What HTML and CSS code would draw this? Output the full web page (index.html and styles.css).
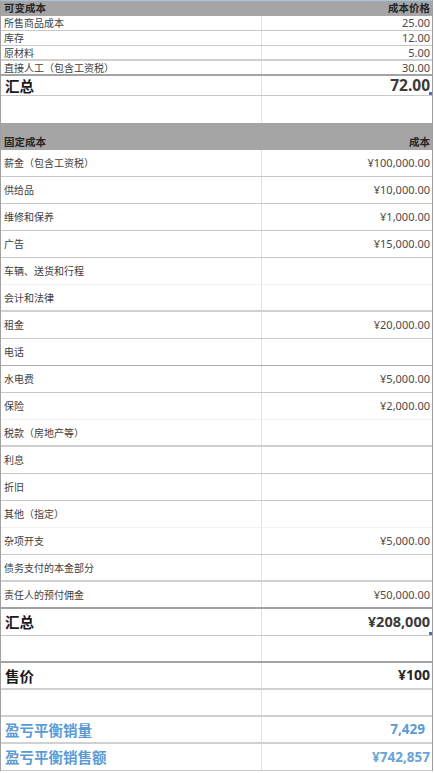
FILE: index.html
```html
<!DOCTYPE html>
<html lang="zh-CN">
<head>
<meta charset="utf-8">
<title>盈亏平衡分析</title>
<link rel="stylesheet" href="styles.css">
</head>
<body>
<div class="sheet">
  <div class="row hdr h16"><div class="c l">可变成本</div><div class="c r">成本价格</div></div>
  <div class="row h15 b1"><div class="c l">所售商品成本</div><div class="c r num">25.00</div></div>
  <div class="row h15 b1"><div class="c l">库存</div><div class="c r num">12.00</div></div>
  <div class="row h15 b2l"><div class="c l">原材料</div><div class="c r num">5.00</div></div>
  <div class="row h15 b2d"><div class="c l">直接人工（包含工资税）</div><div class="c r num">30.00</div></div>
  <div class="row h20 b1"><div class="c l total">汇总</div><div class="c r totalnum mark">72.00</div></div>
  <div class="row h27 nob"><div class="c l"></div><div class="c r"></div></div>
  <div class="row hdr h27 bottom"><div class="c l">固定成本</div><div class="c r">成本</div></div>

  <div class="row h27 b1"><div class="c l">薪金（包含工资税）</div><div class="c r num">¥100,000.00</div></div>
  <div class="row h27 b1"><div class="c l">供给品</div><div class="c r num">¥10,000.00</div></div>
  <div class="row h27 b1"><div class="c l">维修和保养</div><div class="c r num">¥1,000.00</div></div>
  <div class="row h27 b1"><div class="c l">广告</div><div class="c r num">¥15,000.00</div></div>
  <div class="row h27 bf"><div class="c l">车辆、送货和行程</div><div class="c r num"></div></div>
  <div class="row h27 b2l"><div class="c l">会计和法律</div><div class="c r num"></div></div>
  <div class="row h27 b1"><div class="c l">租金</div><div class="c r num">¥20,000.00</div></div>
  <div class="row h27 b1d"><div class="c l">电话</div><div class="c r num"></div></div>
  <div class="row h27 b1"><div class="c l">水电费</div><div class="c r num">¥5,000.00</div></div>
  <div class="row h27 bf"><div class="c l">保险</div><div class="c r num">¥2,000.00</div></div>
  <div class="row h27 b2l"><div class="c l">税款（房地产等）</div><div class="c r num"></div></div>
  <div class="row h27 b1"><div class="c l">利息</div><div class="c r num"></div></div>
  <div class="row h27 b1"><div class="c l">折旧</div><div class="c r num"></div></div>
  <div class="row h27 bf"><div class="c l">其他（指定）</div><div class="c r num"></div></div>
  <div class="row h27 b1"><div class="c l">杂项开支</div><div class="c r num">¥5,000.00</div></div>
  <div class="row h27 b2l"><div class="c l">债务支付的本金部分</div><div class="c r num"></div></div>
  <div class="row h27 b2d"><div class="c l">责任人的预付佣金</div><div class="c r num">¥50,000.00</div></div>
  <div class="row h27 b1"><div class="c l total">汇总</div><div class="c r totalnum big mark">¥208,000</div></div>
  <div class="row h27 b2d"><div class="c l"></div><div class="c r"></div></div>
  <div class="row h27 b2l"><div class="c l total">售价</div><div class="c r totalnum price">¥100</div></div>
  <div class="row h27 b2l"><div class="c l"></div><div class="c r"></div></div>
  <div class="row h27 b2l"><div class="c l total blue">盈亏平衡销量</div><div class="c r totalnum blue qty">7,429</div></div>
  <div class="row h27 b1"><div class="c l total blue">盈亏平衡销售额</div><div class="c r totalnum blue sales">¥742,857</div></div>
</div>
</body>
</html>
```

FILE: styles.css
```css
* { box-sizing: border-box; }
html, body { margin: 0; padding: 0; background: #ffffff; }
body { font-family: "Noto Sans CJK SC", "Noto Sans", sans-serif; color: #404040; }

.sheet {
  width: 433px;
  border-top: 1px solid #a9c4e0;
  border-left: 1px solid #a0a0a0;
  border-right: 1px solid #a0a0a0;
}

.row {
  display: grid;
  grid-template-columns: 261px 1fr;
}
.c {
  display: flex;
  align-items: center;
  white-space: nowrap;
  font-size: 10px;
  line-height: 1.2;
}
.l { padding-left: 3px; border-right: 1px solid #e2e2e2; }
.r { justify-content: flex-end; padding-right: 2px; }

.h15 { height: 15px; }
.h16 { height: 15px; }
.h20 { height: 20px; }
.h27 { height: 27px; }

.hdr { background: #a5a5a5; }
.hdr .c { font-weight: bold; font-size: 10.5px; color: #262626; border-right: none; }
.hdr.bottom .c { align-items: flex-end; padding-bottom: 1px; }

.b1 { border-bottom: 1px solid #c8c8c8; }
.b1d { border-bottom: 1px solid #ababab; }
.bf { border-bottom: 1px solid #f1f1f1; }
.b2l { border-bottom: 2px solid #d0d0d0; }
.b2d { border-bottom: 2px solid #a3a3a3; }
.nob { border-bottom: none; }

.num { font-family: "Noto Sans", sans-serif; font-size: 11px; color: #4a4a4a; }

.total { font-weight: bold; font-size: 14.5px; color: #1a1a1a; padding-left: 4px; }
.totalnum { font-family: "Noto Sans", sans-serif; font-weight: bold; font-size: 15.5px; color: #3a3a3a; }
.big { font-size: 14.5px; }
.price { font-size: 14px; color: #262626; }
.blue { color: #5b9bd5; }
.qty { font-size: 13.5px; padding-right: 7px; }
.sales { font-size: 13.5px; color: #6aa3d8; }

.mark { position: relative; }
.mark::after {
  content: "";
  position: absolute;
  right: 0;
  bottom: 0;
  width: 3px;
  height: 3px;
  background: #4a6fc4;
}
```
